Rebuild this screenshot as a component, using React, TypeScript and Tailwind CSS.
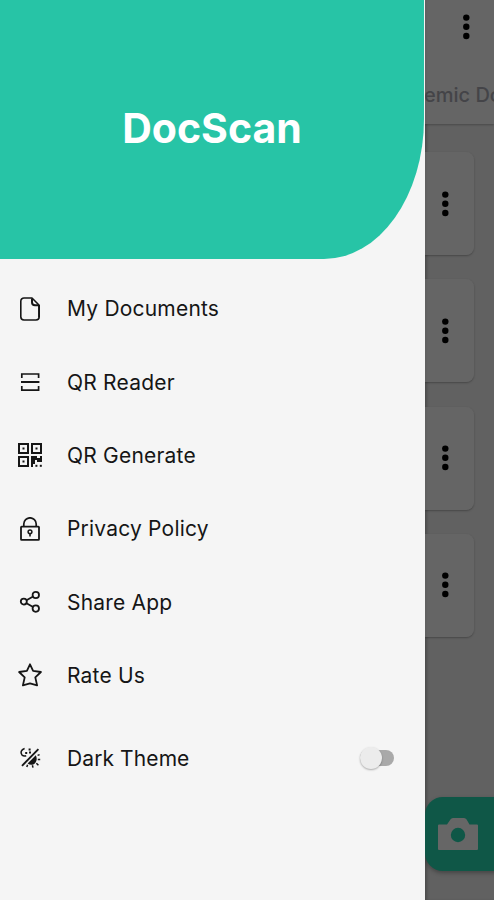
import React from "react";

const FileIcon = () => (
  <svg className="w-6 h-6" viewBox="0 0 24 24" fill="none" stroke="#161616">
    <path
      strokeWidth={1.6}
      strokeLinejoin="round"
      d="M14 1H6a3.2 3.2 0 0 0-3.2 3.2v15.6A3.2 3.2 0 0 0 6 23h12a3.2 3.2 0 0 0 3.2-3.2V8.2L14 1z"
    />
    <path strokeWidth={2} strokeLinejoin="round" d="M14 1.4v3.8a3 3 0 0 0 3 3h4" />
    <path strokeWidth={1.8} d="M21 8v12" />
  </svg>
);

const ReaderIcon = () => (
  <svg className="w-6 h-6" viewBox="0 0 24 24" fill="none" stroke="#161616">
    <path strokeWidth={1.7} d="M3.8 8V4h16.8v4M3.8 16v4.2h16.8V16" />
    <path strokeWidth={2} d="M3 12h18.4" />
  </svg>
);

const QrIcon = () => (
  <svg className="w-6 h-6" viewBox="0 0 24 24" fill="#161616">
    <g fill="none" stroke="#161616" strokeWidth={2}>
      <rect x="1" y="1" width="9" height="9" />
      <rect x="14" y="1" width="9" height="9" />
      <rect x="1" y="14" width="9" height="9" />
    </g>
    <rect x="4.5" y="4.5" width="2" height="2" />
    <rect x="17.5" y="4.5" width="2" height="2" />
    <rect x="4.5" y="17.5" width="2" height="2" />
    <path d="M13 13h6v2h3v-2h2v6h-5v-2h-2v4h-2v3h-2z" />
    <rect x="17.4" y="21.8" width="2" height="2" />
    <rect x="21.8" y="21.8" width="2" height="2" />
  </svg>
);

const LockIcon = () => (
  <svg className="w-6 h-6" viewBox="0 0 24 24" fill="none" stroke="#161616">
    <rect x="3" y="9.6" width="18" height="13.2" rx="0.6" strokeWidth={1.8} />
    <path strokeWidth={1.7} d="M5.8 9.5V7a6.2 6.2 0 0 1 12.4 0v2.5" />
    <circle cx="12" cy="14.8" r="1.9" strokeWidth={1.5} />
    <path strokeWidth={1.6} d="M12 16.5v3" />
  </svg>
);

const ShareIcon = () => (
  <svg
    className="w-6 h-6"
    viewBox="0 0 24 24"
    fill="none"
    stroke="#161616"
    strokeWidth={1.8}
  >
    <circle cx="5.8" cy="11.6" r="3" />
    <circle cx="17.8" cy="5" r="3.2" />
    <circle cx="17.8" cy="18.6" r="3.2" />
    <path d="M8.5 10.2l6.6-3.7M8.5 13.2l6.6 3.8" />
  </svg>
);

const StarIcon = () => (
  <svg className="w-6 h-6" viewBox="0 0 24 24" fill="none" stroke="#161616">
    <path
      strokeWidth={1.8}
      strokeLinejoin="round"
      d="M12 1.3l3.1 6.6 7.8 1.1-5.6 5.4 1.8 8-7.1-2.1-7.1 2.1 1.8-8L1.100 9l7.800-1.100z"
    />
  </svg>
);

const ThemeIcon = () => (
  <svg className="w-6 h-6" viewBox="0 0 24 24" fill="none" stroke="#161616">
    <path strokeWidth={1.9} d="M20.4 3.2L4 19.8" />
    {/* moon and stars */}
    <path strokeWidth={1.6} d="M6.6 2.4C3.2 3.4 2 6.6 4 9c1 1 2.4 1.3 4.2.8" />
    <path strokeWidth={2} d="M11.6 2.4v2M8.2 6v2M12 5.4v2" />
    {/* sun */}
    <path fill="#161616" stroke="none" d="M17.8 9.2L9.6 17.6c2.4 1.8 5.6 1.6 7.4-.4 2-2.2 2.2-5.4.8-8z" />
    <path strokeWidth={1.5} d="M19.6 9.4l2-.8M19.8 13.4h2.4M18.4 17.2l2 2M14.4 19.2l.6 2.4M9.6 18.8l-.8 2.2" />
  </svg>
);

const CameraIcon = () => (
  <svg className="w-10 h-8 shrink-0" viewBox="0 0 40 32">
    <path
      fill="#666666"
      d="M1 6.5h8l3.4-5A3 3 0 0 1 15 0h11a3 3 0 0 1 2.6 1.5l2.9 5H39a1 1 0 0 1 1 1V31a1 1 0 0 1-1 1H1a1 1 0 0 1-1-1V7.5a1 1 0 0 1 1-1z"
    />
    <circle cx="20" cy="17" r="7.2" fill="#0f5747" />
  </svg>
);

const MoreDots = () => (
  <svg className="w-[7px] h-[26px]" viewBox="0 0 7 26">
    <circle cx="3.3" cy="3.6" r="3.2" />
    <circle cx="3.3" cy="12.8" r="3.2" />
    <circle cx="3.3" cy="22" r="3.2" />
  </svg>
);

const menuItems = [
  { label: "My Documents", icon: <FileIcon /> },
  { label: "QR Reader", icon: <ReaderIcon /> },
  { label: "QR Generate", icon: <QrIcon /> },
  { label: "Privacy Policy", icon: <LockIcon /> },
  { label: "Share App", icon: <ShareIcon /> },
  { label: "Rate Us", icon: <StarIcon /> },
];

const documents = [1, 2, 3, 4];

const App = () => {
  return (
    <div className="flex w-[494px] h-[900px] overflow-hidden bg-[#616161] font-['Inter',sans-serif]">
      {/* Drawer */}
      <aside className="w-[425px] shrink-0 h-full flex flex-col bg-[#f5f5f5]">
        <header className="w-[424px] h-[259px] shrink-0 flex items-center justify-center bg-[#27c4a6] rounded-br-[100px_140px]">
          <h1 className="pb-0.5 text-[41px] leading-none font-bold text-white">DocScan</h1>
        </header>

        <nav className="flex flex-col pt-[13px]">
          {menuItems.map((item) => (
            <a
              key={item.label}
              className="flex items-center h-[73.3px] pl-[18px] gap-[25px] text-[21px] tracking-[0.2px] text-[#161616]"
            >
              {item.icon}
              <span className="pt-px">{item.label}</span>
            </a>
          ))}
        </nav>

        <div className="flex items-center h-[73px] mt-[10px] pl-[18px] pr-[31px] gap-[25px] text-[21px] tracking-[0.1px] text-[#161616]">
          <ThemeIcon />
          <span className="grow">Dark Theme</span>
          <button className="flex items-center w-[34px] h-4 rounded-full bg-[#a9a9a9]">
            <span className="w-[22px] h-[22px] shrink-0 rounded-full bg-[#ececec] shadow-[0_1px_2px_rgba(0,0,0,0.3)]" />
          </button>
        </div>
      </aside>

      {/* Dimmed page behind the drawer */}
      <main className="w-[69px] h-full flex flex-col overflow-hidden shadow-[inset_3px_0_3px_-1px_rgba(0,0,0,0.22)]">
        <div className="h-[124px] shrink-0 flex flex-col bg-[#666666]/80 shadow-[0_1px_2px_rgba(0,0,0,0.25)]">
          <div className="h-[54px] shrink-0 flex items-center pl-[38px]">
            <MoreDots />
          </div>
          <div className="pt-[25px] whitespace-nowrap text-[20px] leading-8 font-medium text-[#444448] -ml-px">
            emic Do
          </div>
        </div>

        <div className="flex flex-col gap-[24.3px] pt-7">
          {documents.map((id) => (
            <div
              key={id}
              className="w-[49px] h-[103px] flex items-center pl-[17px] rounded-r-lg bg-[#666666]/80 shadow-[0_1px_2px_rgba(0,0,0,0.28)]"
            >
              <MoreDots />
            </div>
          ))}
        </div>

        <div className="mt-auto mb-[29px] h-[74px] w-[90px] shrink-0 flex items-center pl-[13px] rounded-l-[18px] bg-[#0f5747] shadow-[0_2px_4px_rgba(0,0,0,0.3)]">
          <CameraIcon />
        </div>
      </main>
    </div>
  );
};

export default App;
